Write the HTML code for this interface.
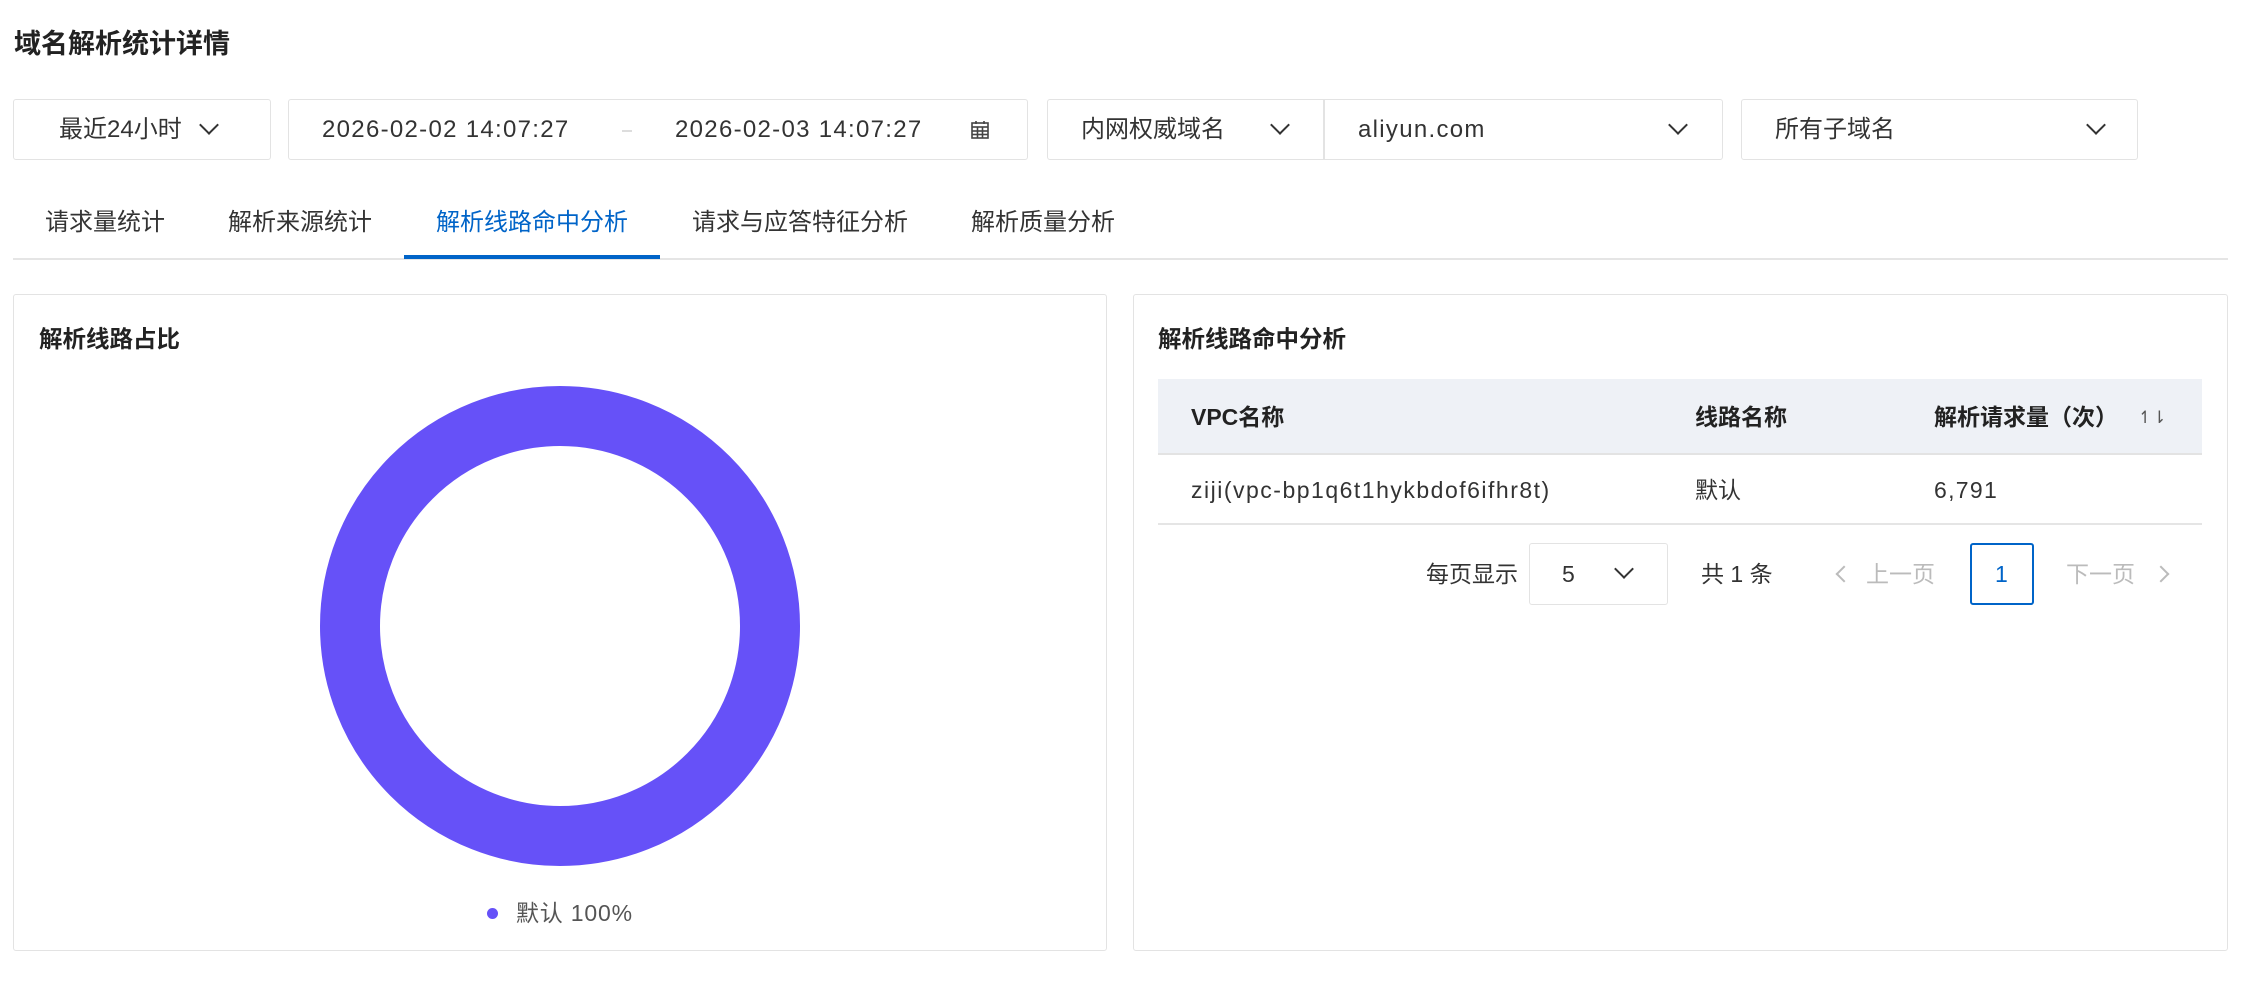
<!DOCTYPE html>
<html><head><meta charset="utf-8"><style>
*{box-sizing:border-box;margin:0;padding:0}
body{width:2258px;height:992px;background:#fff;font-family:"Liberation Sans","Noto Sans CJK SC",sans-serif;color:#333;position:relative;overflow:hidden;font-size:24px}
.a{position:absolute}
.box{position:absolute;border:1.5px solid #e3e3e3;border-radius:3px;background:#fff}
.t{position:absolute;white-space:nowrap;line-height:1}
.l{letter-spacing:1.3px}
.s{font-size:23px}
.chev{position:absolute;width:14px;height:14px;border-right:2.5px solid #333;border-bottom:2.5px solid #333;transform:rotate(45deg)}
</style></head><body>
<div class="t" style="left:14px;top:31px;font-size:27px;font-weight:bold;color:#222">域名解析统计详情</div>

<div class="box" style="left:13px;top:99px;width:258px;height:61px"></div>
<div class="t" style="left:59px;top:118px">最近24小时</div>
<div class="chev" style="left:202px;top:118px"></div>

<div class="box" style="left:288px;top:99px;width:740px;height:61px"></div>
<div class="t l" style="left:322px;top:118px">2026-02-02 14:07:27</div>
<div class="a" style="left:622px;top:130px;width:10px;height:2px;background:#ddd"></div>
<div class="t l" style="left:675px;top:118px">2026-02-03 14:07:27</div>
<svg class="a" style="left:970px;top:120px" width="20" height="20" viewBox="0 0 20 20" fill="none" stroke="#444" stroke-width="1.6"><rect x="2" y="3" width="16" height="15"/><line x1="2" y1="7" x2="18" y2="7"/><line x1="6" y1="1" x2="6" y2="4"/><line x1="14" y1="1" x2="14" y2="4"/><line x1="2" y1="11" x2="18" y2="11"/><line x1="2" y1="14.5" x2="18" y2="14.5"/><line x1="7.5" y1="7" x2="7.5" y2="18"/><line x1="12.5" y1="7" x2="12.5" y2="18"/></svg>

<div class="box" style="left:1047px;top:99px;width:676px;height:61px"></div>
<div class="a" style="left:1323px;top:100px;width:1.5px;height:59px;background:#e3e3e3"></div>
<div class="t" style="left:1081px;top:118px">内网权威域名</div>
<div class="chev" style="left:1273px;top:118px"></div>
<div class="t l" style="left:1358px;top:118px">aliyun.com</div>
<div class="chev" style="left:1671px;top:118px"></div>

<div class="box" style="left:1741px;top:99px;width:397px;height:61px"></div>
<div class="t" style="left:1775px;top:118px">所有子域名</div>
<div class="chev" style="left:2089px;top:118px"></div>

<div class="t" style="left:45px;top:211px">请求量统计</div>
<div class="t" style="left:228px;top:211px">解析来源统计</div>
<div class="t" style="left:436px;top:211px;color:#0064c8">解析线路命中分析</div>
<div class="t" style="left:692px;top:211px">请求与应答特征分析</div>
<div class="t" style="left:971px;top:211px">解析质量分析</div>
<div class="a" style="left:13px;top:258px;width:2215px;height:2px;background:#e5e5e5"></div>
<div class="a" style="left:404px;top:255px;width:256px;height:4px;background:#0064c8"></div>

<div class="box" style="left:13px;top:294px;width:1094px;height:657px"></div>
<div class="t" style="left:39px;top:328px;font-size:23.5px;font-weight:bold;color:#222">解析线路占比</div>
<svg class="a" style="left:310px;top:376px" width="500" height="500"><circle cx="250" cy="250" r="210" fill="none" stroke="#6651f8" stroke-width="60"/></svg>
<div class="a" style="left:487px;top:908px;width:11px;height:11px;border-radius:50%;background:#6651f8"></div>
<div class="t s" style="left:516px;top:902px;color:#555;letter-spacing:0.8px">默认 100%</div>

<div class="box" style="left:1133px;top:294px;width:1095px;height:657px"></div>
<div class="t" style="left:1158px;top:328px;font-size:23.5px;font-weight:bold;color:#222">解析线路命中分析</div>
<div class="a" style="left:1158px;top:379px;width:1044px;height:76px;background:#eef1f6;border-bottom:2px solid #e3e3e3"></div>
<div class="t s" style="left:1191px;top:406px;font-weight:bold;color:#222">VPC名称</div>
<div class="t s" style="left:1695px;top:406px;font-weight:bold;color:#222">线路名称</div>
<div class="t s" style="left:1934px;top:406px;font-weight:bold;color:#222">解析请求量（次）</div>
<div class="t" style="left:2138px;top:409px;font-size:17px;color:#555">↿⇂</div>
<div class="t s" style="left:1191px;top:479px;letter-spacing:1.5px">ziji(vpc-bp1q6t1hykbdof6ifhr8t)</div>
<div class="t s" style="left:1695px;top:479px">默认</div>
<div class="t s l" style="left:1934px;top:479px">6,791</div>
<div class="a" style="left:1158px;top:523px;width:1044px;height:2px;background:#e5e5e5"></div>

<div class="t s" style="left:1426px;top:563px">每页显示</div>
<div class="box" style="left:1529px;top:543px;width:139px;height:62px"></div>
<div class="t s" style="left:1562px;top:563px">5</div>
<div class="chev" style="left:1617px;top:562px"></div>
<div class="t s" style="left:1701px;top:563px">共 1 条</div>
<div class="chev" style="left:1838px;top:568px;transform:rotate(135deg);border-color:#bbb;width:12px;height:12px"></div>
<div class="t s" style="left:1866px;top:563px;color:#bbb">上一页</div>
<div class="a" style="left:1970px;top:543px;width:64px;height:62px;border:2px solid #0064c8;border-radius:3px"></div>
<div class="t s" style="left:1995px;top:563px;color:#0064c8">1</div>
<div class="t s" style="left:2066px;top:563px;color:#bbb">下一页</div>
<div class="chev" style="left:2155px;top:568px;transform:rotate(-45deg);border-color:#bbb;width:12px;height:12px"></div>
</body></html>
